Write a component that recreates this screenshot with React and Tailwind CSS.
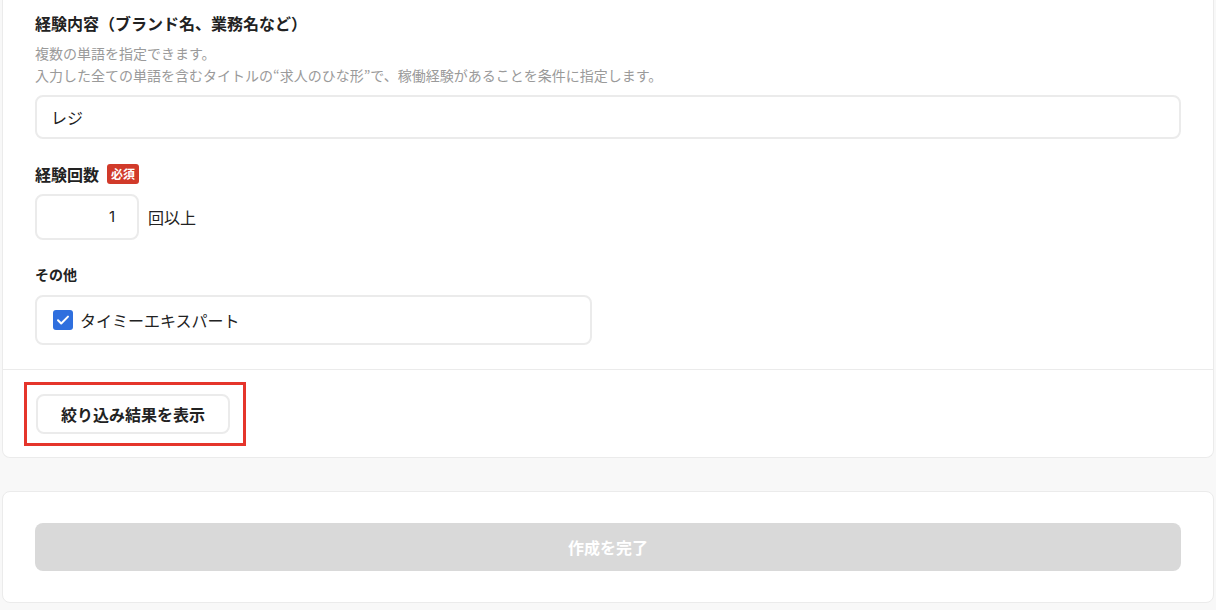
const FONT = { fontFamily: '"Noto Sans CJK JP", "Noto Sans", sans-serif' };

const CheckIcon = () => (
  <svg viewBox="0 0 20 20" className="w-[20px] h-[20px]">
    <rect x="0" y="0" width="20" height="20" rx="3" fill="#2f6fde" />
    <path d="M5 10.3l3.2 3.2L15 6.6" fill="none" stroke="#fff" strokeWidth="2" strokeLinecap="round" strokeLinejoin="round" />
  </svg>
);

const App = () => {
  return (
    <div className="w-full min-h-[610px] bg-[#f8f8f8] px-[2px] text-[#222]" style={FONT}>
      <div className="bg-white border border-t-0 border-[#ebebeb] rounded-b-lg">
        <div className="px-[32px] pt-[11px] pb-[24px]">
          <h3 className="text-[16px] font-bold leading-[24px]">経験内容（ブランド名、業務名など）</h3>
          <div className="mt-[7px] text-[14px] leading-[22px] text-[#9a9a9a]">
            <p>複数の単語を指定できます。</p>
            <p>入力した全ての単語を含むタイトルの“求人のひな形”で、稼働経験があることを条件に指定します。</p>
          </div>
          <div className="mt-[9px] h-[44px] border-2 border-[#ebebeb] rounded-lg flex items-center px-[14px] text-[16px]">
            レジ
          </div>

          <div className="mt-[23px] flex items-center gap-[8px]">
            <span className="text-[16px] font-bold leading-[24px]">経験回数</span>
            <span className="bg-[#d13a2a] text-white text-[12px] font-bold leading-[20px] px-[4px] rounded-[3px]">必須</span>
          </div>
          <div className="mt-[8px] flex items-center gap-[9px]">
            <div className="w-[104px] h-[46px] border-2 border-[#ebebeb] rounded-lg flex items-center justify-end pr-[22px] text-[15px] font-[Inter,sans-serif]">
              1
            </div>
            <span className="text-[16px]">回以上</span>
          </div>

          <div className="mt-[23px] text-[14px] font-bold leading-[22px]">その他</div>
          <div className="mt-[10px] w-[557px] h-[50px] border-2 border-[#ebebeb] rounded-lg flex items-center gap-[7px] pl-[16px] text-[16px]">
            <CheckIcon />
            <span>タイミーエキスパート</span>
          </div>
        </div>
        <div className="border-t border-[#ebebeb] px-[21px] pt-[12px] pb-[11px]">
          <div className="w-[222px] h-[64px] border-[3px] border-[#e5352b] flex items-center pl-[9px]">
            <button className="w-[194px] h-[40px] border-2 border-[#ebebeb] rounded-lg bg-white text-[16px] font-bold">
              絞り込み結果を表示
            </button>
          </div>
        </div>
      </div>

      <div className="mt-[33px] bg-white border border-[#ebebeb] rounded-lg px-[32px] py-[31px]">
        <button className="w-full h-[48px] rounded-lg bg-[#d9d9d9] text-white text-[16px] font-bold">
          作成を完了
        </button>
      </div>
    </div>
  );
};

export default App;
